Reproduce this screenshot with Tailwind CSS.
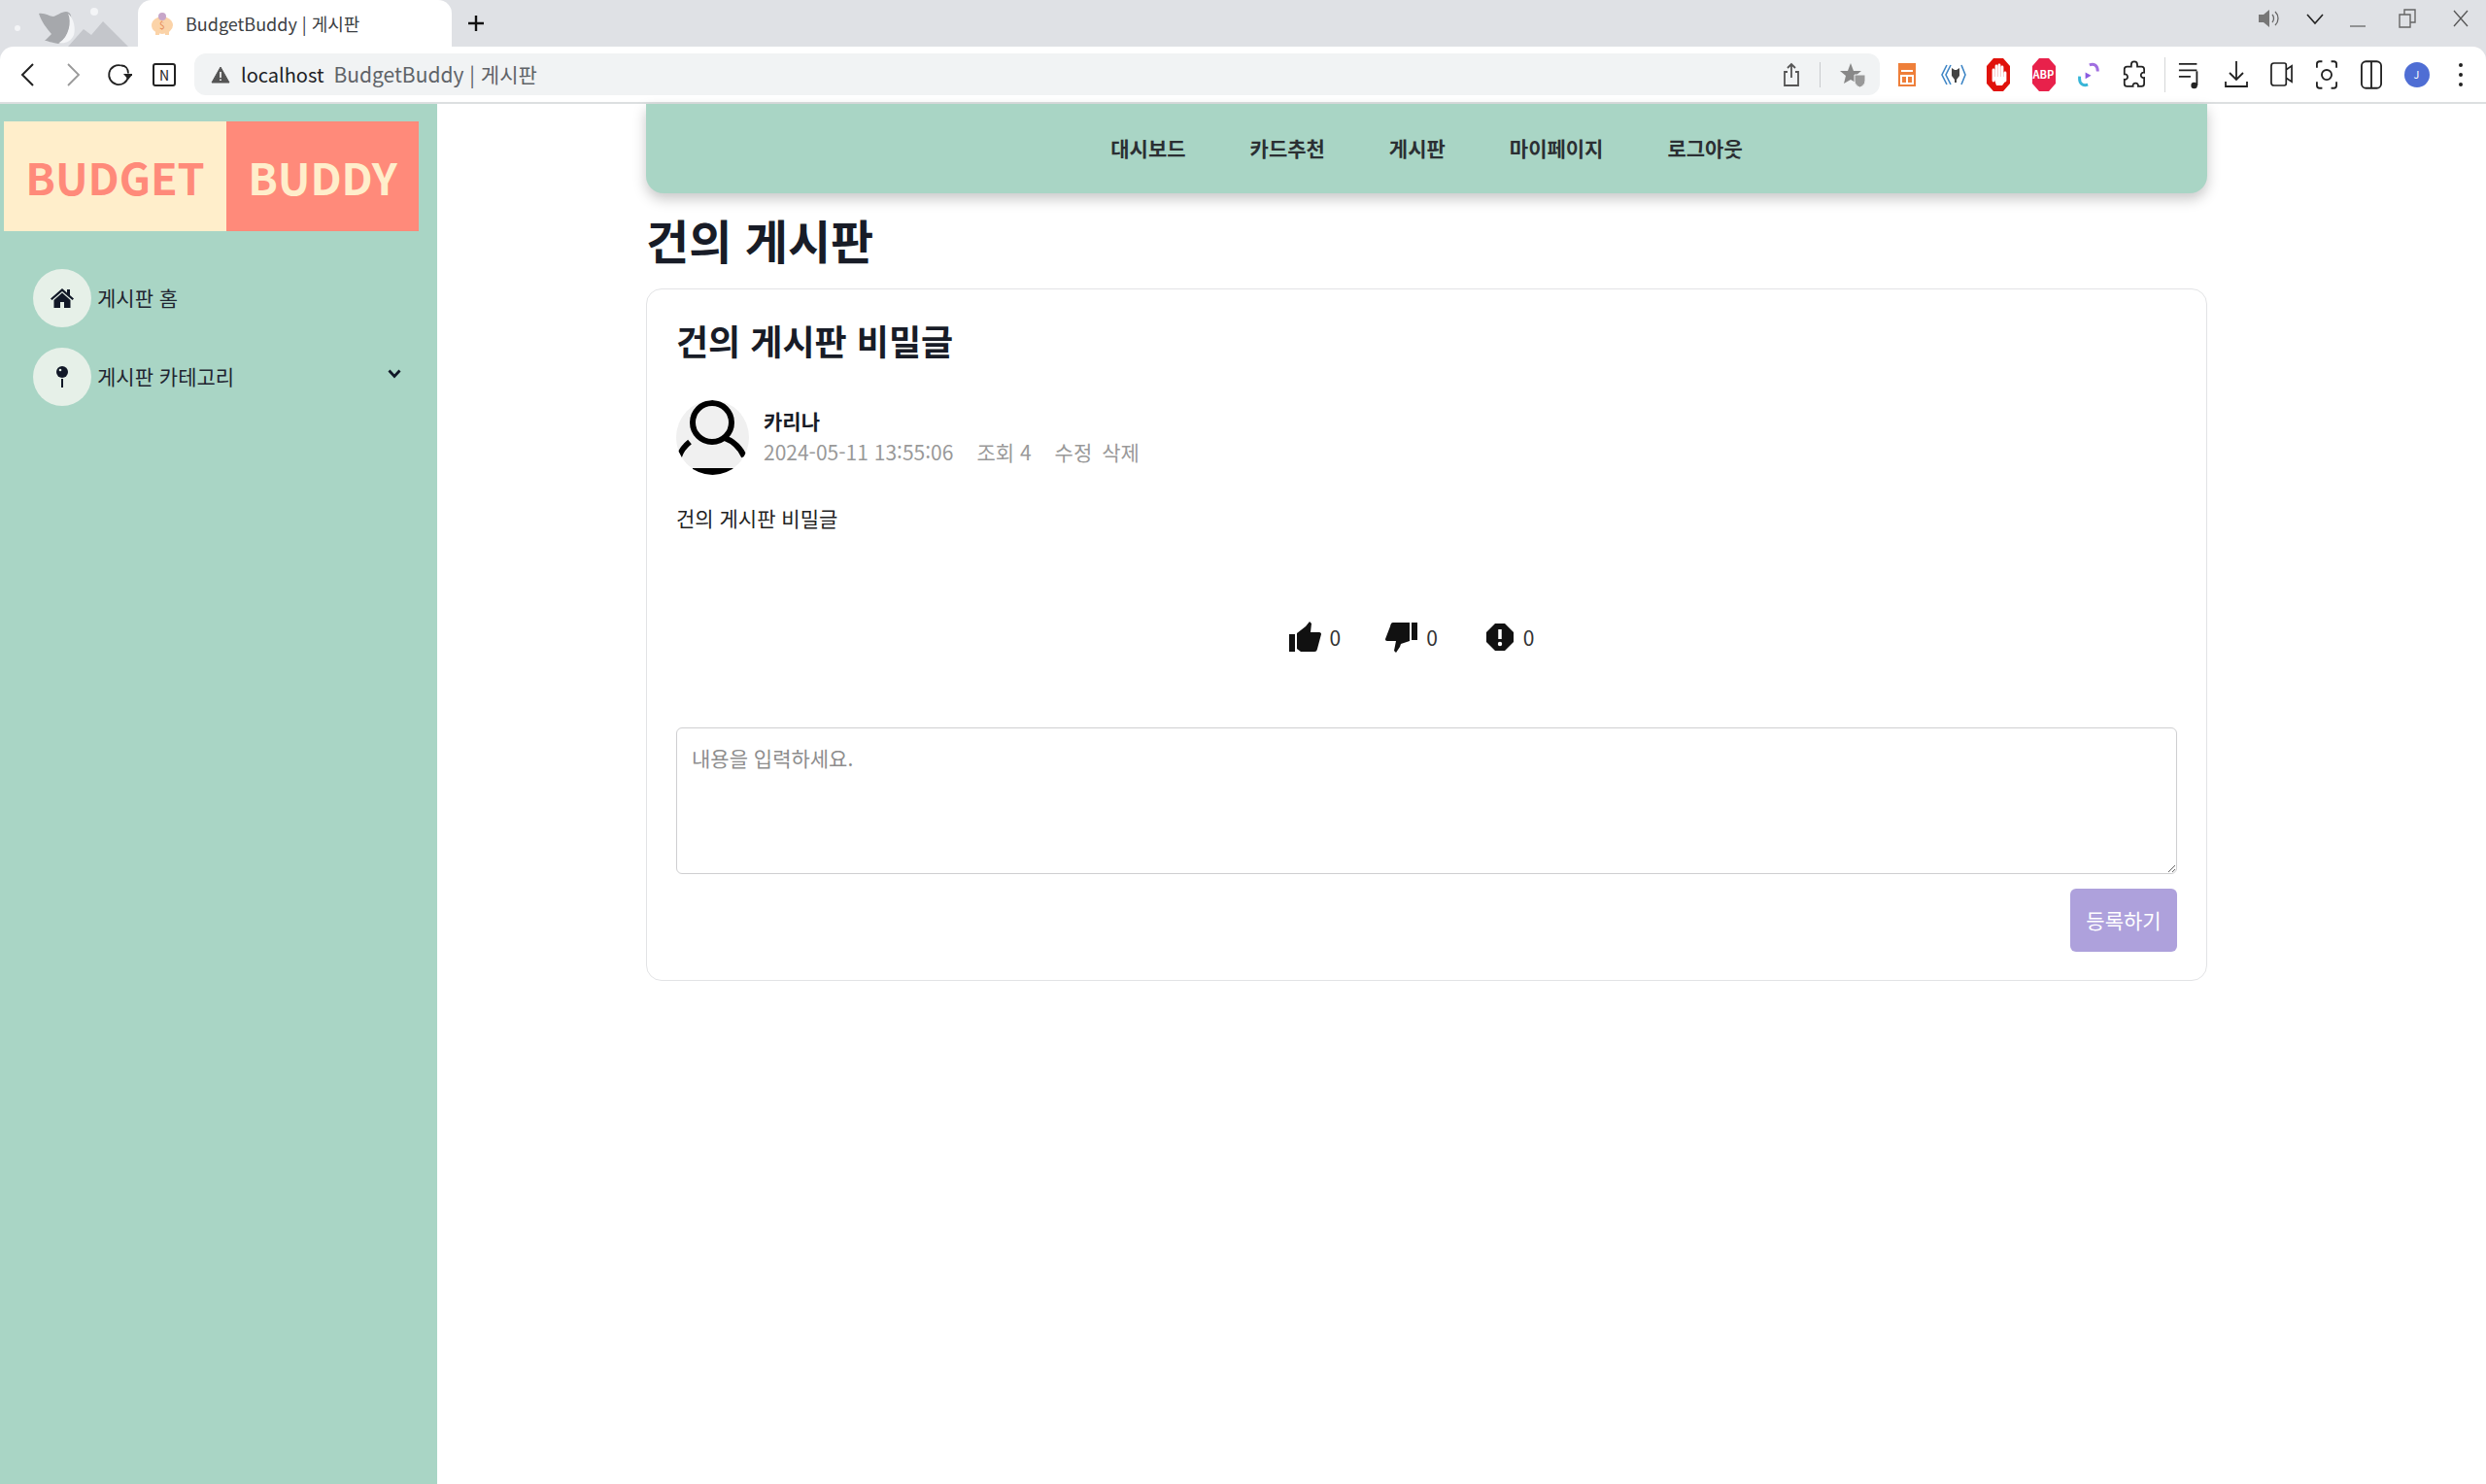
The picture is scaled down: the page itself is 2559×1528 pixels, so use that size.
<!DOCTYPE html>
<html lang="ko">
<head>
    <meta charset="UTF-8">
    <title>BudgetBuddy | 게시판</title>
    <script src="https://cdn.jsdelivr.net/npm/@tailwindcss/browser@4"></script>
</head>
<body class="w-[2559px] h-[1528px] overflow-hidden flex flex-col bg-white font-['Noto_Sans_CJK_KR',sans-serif] text-[#1f2430]">

    <!-- Browser tab strip -->
    <div class="h-[48px] shrink-0 bg-[#dfe1e5] flex items-end">
        <div class="w-[142px] h-[48px] shrink-0 overflow-hidden">
            <svg width="142" height="48" viewBox="0 0 142 48">
                <circle cx="18" cy="29" r="3" fill="#f4f5f7"/>
                <circle cx="97" cy="12" r="4" fill="#f4f5f7"/>
                <path d="M40 14c6-1 11 3 15 3 4-1 8-5 13-5 2 0 4 1 5 4 1 8-3 24-13 29-8-1-10-3-14-3l7-7c-5-6-10-12-13-21z" fill="#a6a8ac"/>
                <path d="M70 14c4 8 1 24-9 30 6 1 12-1 15-8 2-7 0-17-6-22z" fill="#f4f5f7"/>
                <path d="M70 48l16-18 8 6 12-14 26 26z" fill="#c4c6cb"/>
            </svg>
        </div>
        <div class="w-[323px] h-[48px] shrink-0 bg-white rounded-t-[14px] flex items-center pl-[12px]">
            <svg width="26" height="26" viewBox="0 0 26 26" class="shrink-0">
                <ellipse cx="13" cy="15" rx="11" ry="9" fill="#fbd3a8"/>
                <circle cx="13" cy="6" r="4" fill="#c7a6c9"/>
                <rect x="6" y="21" width="4" height="4" fill="#fbd3a8"/>
                <rect x="16" y="21" width="4" height="4" fill="#fbd3a8"/>
                <text x="10" y="19" font-size="10" fill="#e58a5a">$</text>
            </svg>
            <span class="ml-[11px] text-[18px] text-[#3c4043] whitespace-nowrap">BudgetBuddy | 게시판</span>
        </div>
        <div class="w-[50px] h-[48px] flex items-center justify-center shrink-0">
            <svg width="18" height="18" viewBox="0 0 18 18"><path d="M9 1v16M1 9h16" stroke="#111" stroke-width="2.4"/></svg>
        </div>
        <div class="flex-1"></div>
        <!-- window controls -->
        <div class="h-[48px] flex items-start pt-[9px] pr-[17px] gap-[26px] text-[#444]">
            <svg width="24" height="20" viewBox="0 0 24 20"><path d="M1 6h5l6-5v18l-6-5H1z" fill="#777"/><path d="M15 6c2 2 2 6 0 8M18 3c4 4 4 10 0 14" fill="none" stroke="#666" stroke-width="1.3"/></svg>
            <svg width="18" height="20" viewBox="0 0 18 20"><path d="M1 6l8 9 8-9" fill="none" stroke="#222" stroke-width="1.6"/></svg>
            <svg width="18" height="20" viewBox="0 0 18 20"><path d="M1 18h16" stroke="#777" stroke-width="1.5"/></svg>
            <svg width="18" height="20" viewBox="0 0 18 20" class="ml-[7px]"><path d="M1 6h11v13H1zM6 6V1h11v13h-5" fill="none" stroke="#666" stroke-width="1.4"/></svg>
            <svg width="18" height="20" viewBox="0 0 18 20" class="ml-[11px]"><path d="M2 2l14 16M16 2L2 18" stroke="#555" stroke-width="1.3"/></svg>
        </div>
    </div>

    <!-- Browser toolbar -->
    <div class="h-[57px] shrink-0 bg-[#dfe1e5]">
        <div class="h-[57px] bg-white rounded-t-[14px] flex items-center">
            <div class="w-[200px] shrink-0 flex items-center">
                <div class="w-[56px] flex justify-center">
                    <svg width="16" height="26" viewBox="0 0 16 26"><path d="M14 2L3 13l11 11" fill="none" stroke="#222" stroke-width="2"/></svg>
                </div>
                <div class="w-[38px] flex justify-center ml-[1px]">
                    <svg width="16" height="26" viewBox="0 0 16 26"><path d="M2 2l11 11L2 24" fill="none" stroke="#999" stroke-width="1.8"/></svg>
                </div>
                <div class="w-[56px] flex justify-center">
                    <svg width="26" height="26" viewBox="0 0 26 26"><path d="M15 3.5A10 10 0 1 0 22 15" fill="none" stroke="#222" stroke-width="1.8"/><path d="M15 3.500c4 0 7 3 7 8" fill="none" stroke="#222" stroke-width="1.8"/><path d="M17 12h10l-5 6z" fill="#222"/></svg>
                </div>
                <div class="w-[36px] flex justify-center">
                    <div class="w-[24px] h-[24px] border-2 border-[#222] rounded-[3px] flex items-center justify-center text-[14px] leading-none text-[#222]">N</div>
                </div>
            </div>
            <!-- Omnibox -->
            <div class="w-[1735px] h-[43px] shrink-0 bg-[#f1f3f4] rounded-[12px] flex items-center">
                <svg width="20" height="18" viewBox="0 0 20 18" class="ml-[17px] shrink-0"><path d="M10 1L19 17H1z" fill="#555" stroke="#555" stroke-linejoin="round"/><path d="M10 6v6M10 13.500v1.500" stroke="#fff" stroke-width="1.600"/></svg>
                <span class="ml-[11px] text-[20px] text-[#202124] whitespace-nowrap">localhost</span>
                <span class="ml-[10px] text-[21px] text-[#5f6368] whitespace-nowrap">BudgetBuddy | 게시판</span>
                <div class="flex-1"></div>
                <svg width="20" height="28" viewBox="0 0 20 28" class="shrink-0"><path d="M6 11H3v14h14V11h-3M10 17V3M6 7l4-4 4 4" fill="none" stroke="#555" stroke-width="1.800"/></svg>
                <div class="w-[1px] h-[26px] bg-[#c8cacd] ml-[19px]"></div>
                <svg width="28" height="26" viewBox="0 0 28 26" class="ml-[20px] mr-[13px] shrink-0"><path d="M11 1l3 8h8l-6 5 2 8-7-4-7 4 2-8-6-5h8z" fill="#888"/><path d="M15 13h11v6c0 4-3 6-5.500 7-2.500-1-5.500-3-5.500-7z" fill="#999" stroke="#f1f3f4"/></svg>
            </div>
            <!-- Extensions -->
            <div class="flex items-center pl-[15px]">
                <div class="w-[26px] flex justify-center">
                    <svg width="20" height="26" viewBox="0 0 20 26"><rect x="1" y="1" width="18" height="24" fill="#ee7f3a"/><path d="M4 9h12M4 14h12v8H4zM10 14v8" stroke="#fff" stroke-width="2" fill="none"/></svg>
                </div>
                <div class="w-[47px] ml-[11px] flex justify-center">
                    <svg width="26" height="24" viewBox="0 0 26 24"><path d="M6 2L1 12l5 10M10 2L5 12l5 10" fill="none" stroke="#3f86c6" stroke-width="1.600"/><path d="M21 2l4 10-4 10" fill="none" stroke="#3f86c6" stroke-width="1.600"/><path d="M11 5l3 2h2l3-2v8l-3 4v3h-2v-3l-3-4z" fill="#444"/></svg>
                </div>
                <div class="w-[46px] flex justify-center">
                    <svg width="26" height="36" viewBox="0 0 26 36"><path d="M8 1h10l7 8v18l-7 8H8l-7-8V9z" fill="#e0120b"/><path d="M8 24V13M11 22V9M14 22V8M17 22V10M20 24V16" stroke="#fff" stroke-width="2.800" stroke-linecap="round"/><path d="M8 20h12v5l-3 4H11z" fill="#fff"/></svg>
                </div>
                <div class="w-[47px] flex justify-center">
                    <div class="relative w-[26px] h-[36px] flex items-center justify-center">
                        <svg width="26" height="36" viewBox="0 0 26 36" class="absolute inset-0"><path d="M8 1h10l7 8v18l-7 8H8l-7-8V9z" fill="#e8214b"/></svg>
                        <span class="relative text-[11px] font-bold text-white leading-none">ABP</span>
                    </div>
                </div>
                <div class="w-[46px] flex justify-center">
                    <svg width="22" height="28" viewBox="0 0 26 32"><path d="M14 4c5-2 10 0 10 8" fill="none" stroke="#a06ee0" stroke-width="3.500"/><path d="M12 28C6 30 1 27 2 18" fill="none" stroke="#38b6d8" stroke-width="3.500"/><path d="M9 13l7 4-7 4z" fill="#8a5ce0"/></svg>
                </div>
                <div class="w-[46px] flex justify-center">
                    <svg width="23" height="29" viewBox="0 0 26 32"><path d="M10 5c0-5 7-5 7 0v2h5c2 0 3 1 3 3v4c-5-1-5 7 0 6v7c0 2-1 3-3 3h-4c1-5-7-5-6 0H5c-2 0-3-1-3-3v-5c5 1 5-7 0-6v-6c0-2 1-3 3-3h5z" fill="none" stroke="#222" stroke-width="2"/></svg>
                </div>
                <div class="w-[1px] h-[36px] bg-[#d5d6d8] ml-[9px]"></div>
                <div class="w-[49px] flex justify-center">
                    <svg width="24" height="30" viewBox="0 0 26 32"><path d="M1 4h20M1 11h20M1 18h13" stroke="#222" stroke-width="2"/><path d="M21 12v16" stroke="#222" stroke-width="2"/><circle cx="18" cy="28" r="3.500" fill="#222"/></svg>
                </div>
                <div class="w-[47px] flex justify-center">
                    <svg width="24" height="30" viewBox="0 0 24 30"><path d="M12 1v19M5 13l7 7 7-7M1 22v5h22v-5" fill="none" stroke="#222" stroke-width="1.800"/></svg>
                </div>
                <div class="w-[46px] flex justify-center">
                    <svg width="23" height="25" viewBox="0 0 24 26"><path d="M4 1h11c1.500 0 2 1 2 2v20c0 1-.5 2-2 2H4c-2 0-3-1-3-3V4c0-2 1-3 3-3zM17 8l6-4v17l-6-4" fill="none" stroke="#222" stroke-width="1.800"/></svg>
                </div>
                <div class="w-[47px] flex justify-center">
                    <svg width="22" height="30" viewBox="0 0 24 32"><path d="M7 1H4C2 1 1 2 1 4v4M17 1h3c2 0 3 1 3 3v4M7 31H4c-2 0-3-1-3-3v-4M17 31h3c2 0 3-1 3-3v-4" fill="none" stroke="#222" stroke-width="2"/><circle cx="12" cy="16" r="5.500" fill="none" stroke="#222" stroke-width="2"/></svg>
                </div>
                <div class="w-[46px] flex justify-center">
                    <svg width="22" height="30" viewBox="0 0 24 32"><rect x="1" y="1" width="22" height="30" rx="5" fill="none" stroke="#222" stroke-width="2"/><path d="M12 1v30" stroke="#222" stroke-width="2"/></svg>
                </div>
                <div class="w-[47px] flex justify-center">
                    <div class="w-[26px] h-[26px] rounded-full bg-[#4f6ed4] flex items-center justify-center text-[11px] text-white">J</div>
                </div>
                <div class="w-[44px] flex flex-col items-center gap-[6px]">
                    <div class="w-[4px] h-[4px] rounded-full bg-[#222]"></div>
                    <div class="w-[4px] h-[4px] rounded-full bg-[#222]"></div>
                    <div class="w-[4px] h-[4px] rounded-full bg-[#222]"></div>
                </div>
            </div>
        </div>
    </div>
    <div class="h-[2px] shrink-0 bg-[#dcdfe0]"></div>

    <!-- Page -->
    <div class="flex-1 flex min-h-0">
        <!-- Sidebar -->
        <aside class="w-[450px] shrink-0 bg-[#a9d5c5] pt-[18px]">
            <div class="w-[427px] h-[113px] ml-[4px] flex text-[45px] font-bold leading-none">
                <div class="w-[229px] bg-[#ffeecb] text-[#ff8a7a] flex items-center justify-center">BUDGET</div>
                <div class="w-[198px] bg-[#ff8a7a] text-[#ffeecb] flex items-center justify-center">BUDDY</div>
            </div>
            <div class="mt-[39px] ml-[34px] flex flex-col gap-[21px]">
                <div class="flex items-center">
                    <div class="w-[60px] h-[60px] rounded-full bg-[#e6f0e8] flex items-center justify-center">
                        <svg width="24" height="20" viewBox="0 0 24 20"><path d="M12 0L0 10.500l1.500 1.500L12 3l10.500 9 1.500-1.500-4-3.500V1h-3v3.500z" fill="#111827"/><path d="M12 4.500L3.500 12v8H10v-6h4v6h6.500v-8z" fill="#111827"/></svg>
                    </div>
                    <span class="ml-[6px] text-[21px]">게시판 홈</span>
                </div>
                <div class="flex items-center">
                    <div class="w-[60px] h-[60px] rounded-full bg-[#e6f0e8] flex items-center justify-center">
                        <svg width="12" height="22" viewBox="0 0 12 22"><circle cx="6" cy="6" r="6" fill="#111827"/><circle cx="4" cy="4" r="1.300" fill="#e6f0e8"/><rect x="5" y="13" width="2" height="9" fill="#111827"/></svg>
                    </div>
                    <span class="ml-[6px] text-[21px]">게시판 카테고리</span>
                    <svg width="14" height="10" viewBox="0 0 14 10" class="ml-[158px] -mt-[6px]"><path d="M1.500 1.500L7 7.500l5.500-6" fill="none" stroke="#111827" stroke-width="2.800"/></svg>
                </div>
            </div>
        </aside>

        <!-- Main column -->
        <main class="ml-[215px] w-[1607px] shrink-0">
            <nav class="h-[92px] bg-[#a9d5c5] rounded-b-[18px] shadow-[0_6px_14px_rgba(0,0,0,0.22)] flex items-center justify-center gap-[66px] text-[21px] font-bold text-[#2b2f33]">
                <a>대시보드</a>
                <a>카드추천</a>
                <a>게시판</a>
                <a>마이페이지</a>
                <a>로그아웃</a>
            </nav>
            <h1 class="mt-[10px] mb-[14px] h-[74px] leading-[74px] text-[48px] font-bold text-[#181c27]">건의 게시판</h1>
            <section class="h-[713px] border border-[#e2e3e5] rounded-[16px] px-[30px] pt-[24px]">
                <h2 class="text-[36px] font-bold leading-[56px] text-[#181c27]">건의 게시판 비밀글</h2>
                <div class="mt-[34px] flex items-center">
                    <svg width="75" height="77" viewBox="0 0 75 77" class="shrink-0">
                        <defs><clipPath id="avatarClip"><ellipse cx="37.500" cy="38.500" rx="37.500" ry="38.500"/></clipPath></defs>
                        <g clip-path="url(#avatarClip)">
                            <rect width="75" height="77" fill="#f0f0f0"/>
                            <circle cx="37" cy="23" r="20" fill="none" stroke="#000" stroke-width="6"/>
                            <path d="M50 39c8 3 15 8 20 19M3 58c2-6 6-11 11-15" fill="none" stroke="#000" stroke-width="6"/>
                            <path d="M17 70h42v8H17z" fill="#000"/>
                        </g>
                    </svg>
                    <div class="ml-[15px] pt-[1px] pb-[4px]">
                        <div class="mb-[2px] text-[21px] leading-[30px] font-bold text-[#181c27]">카리나</div>
                        <div class="text-[21px] leading-[30px] text-[#999] flex">
                            <span>2024-05-11 13:55:06</span>
                            <span class="ml-[24px]">조회 4</span>
                            <span class="ml-[24px]">수정</span>
                            <span class="ml-[10px]">삭제</span>
                        </div>
                    </div>
                </div>
                <p class="mt-[29px] text-[21px] leading-[30px] text-[#222]">건의 게시판 비밀글</p>

                <!-- Reactions -->
                <div class="mt-[91px] flex justify-center gap-[46px] text-[21px] leading-[34px] text-[#333] pr-[31px]">
                    <div class="flex items-center gap-[9px]">
                        <svg width="33" height="32" viewBox="0 0 33 32"><path d="M0 13h6v18H0z" fill="#111"/><path d="M8 12l9-7 4-5 2 2-1 9h9c1.500 0 2 1 2 2l-4 15c-.5 2-1 3-3 3H12l-4-3z" fill="#111"/></svg>
                        <span>0</span>
                    </div>
                    <div class="flex items-center gap-[9px]">
                        <svg width="33" height="32" viewBox="0 0 33 32"><path d="M33 1h-6v18h6z" fill="#111"/><path d="M25 20l-9 3-1 3-4 6-2-2 2-10H2c-1.500 0-2-1-2-2L5 5c.5-2 1-4 3-4h17z" fill="#111"/></svg>
                        <span>0</span>
                    </div>
                    <div class="flex items-center gap-[10px] ml-[4px]">
                        <svg width="28" height="28" viewBox="0 0 28 28"><path d="M9 0h10l9 9v10l-9 9H9l-9-9V9z" fill="#111"/><path d="M14 6v10" stroke="#fff" stroke-width="3.500"/><circle cx="14" cy="21" r="2.200" fill="#fff"/></svg>
                        <span>0</span>
                    </div>
                </div>

                <textarea placeholder="내용을 입력하세요." class="block mt-[76px] w-[1545px] h-[151px] border border-[#cfcfd1] rounded-[6px] px-[15px] py-[15px] text-[21px] leading-[30px] placeholder:text-[#8d8d8d]"></textarea>
                <div class="mt-[15px] flex justify-end">
                    <button class="w-[110px] h-[65px] bg-[#aea1dc] text-white text-[21px] rounded-[6px]">등록하기</button>
                </div>
            </section>
        </main>
    </div>
</body>
</html>
